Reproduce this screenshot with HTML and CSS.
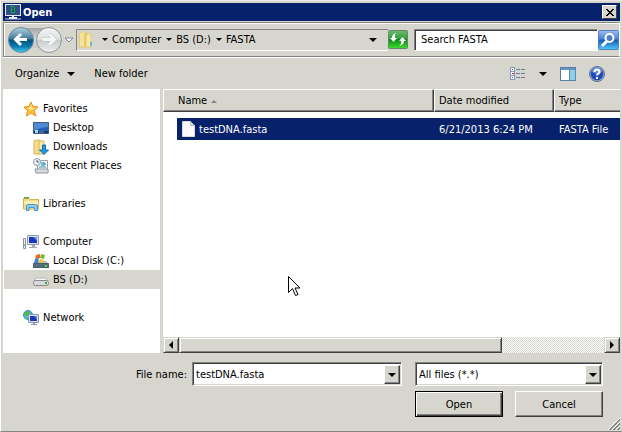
FILE: index.html
```html
<!DOCTYPE html>
<html lang="en">
<head>
    <meta charset="UTF-8">
    <meta name="viewport" content="width=device-width, initial-scale=1.0">
    <title>Open</title>
    <link rel="stylesheet" href="styles.css">
</head>
<body>
    <div class="dialog">
        <header class="title-bar">
            <svg class="title-icon" width="16" height="16" viewBox="0 0 16 16">
                <rect width="16" height="12" fill="#e8ebf5"/>
                <rect x="1" y="1" width="14" height="10" fill="#314d8c"/>
                <path d="M4 15h8v-2h-3v-1H7v1H4z" fill="#f0f0f0"/>
                <path d="M6 2h3v1h1v2H9v1h1v3H6z" fill="#12b340"/>
                <path d="M7 3h2v2H7zM7 6h2v2H7z" fill="#19474d"/>
                <path d="M0 15h16" stroke="#cdd3df"/>
            </svg>
            <h1>Open</h1>
            <button class="close" aria-label="Close">
                <svg width="8" height="7" viewBox="0 0 8 7" shape-rendering="crispEdges"><path d="M0 0h2v1h1v1h2V1h1V0h2v1H7v1H6v1H5v1h1v1h1v1h1v1H6V6H5V5H3v1H2v1H0V6h1V5h1V4h1V3H2V2H1V1H0z" fill="#000"/></svg>
            </button>
        </header>

        <div class="nav-bar">
            <div class="travel">
                <svg width="66" height="28" viewBox="0 0 66 28">
                    <defs>
                        <linearGradient id="track" x1="0" y1="0" x2="0" y2="1">
                            <stop offset="0" stop-color="#a2a6a8"/>
                            <stop offset=".5" stop-color="#d5d8d9"/>
                            <stop offset="1" stop-color="#bfc3c4"/>
                        </linearGradient>
                        <linearGradient id="back" x1="0" y1="0" x2="0" y2="1">
                            <stop offset="0" stop-color="#b2d2df"/>
                            <stop offset=".45" stop-color="#437b9f"/>
                            <stop offset=".5" stop-color="#07527f"/>
                            <stop offset=".75" stop-color="#0878ae"/>
                            <stop offset="1" stop-color="#44d0ee"/>
                        </linearGradient>
                        <linearGradient id="forward" x1="0" y1="0" x2="0" y2="1">
                            <stop offset="0" stop-color="#f4f5f5"/>
                            <stop offset=".49" stop-color="#dddfdf"/>
                            <stop offset=".5" stop-color="#c6caca"/>
                            <stop offset="1" stop-color="#eef0ef"/>
                        </linearGradient>
                    </defs>
                    <path d="M13 2h28v22q-14-5-28 0z" fill="url(#track)"/>
                    <circle cx="14" cy="14" r="12.5" fill="url(#back)" stroke="#6f8994"/>
                    <path d="M20 13.500H9M14 8l-5.500 5.500L14 19" fill="none" stroke="#fff" stroke-width="3"/>
                    <circle cx="42" cy="14" r="12.5" fill="url(#forward)" stroke="#8f9495"/>
                    <path d="M36 13.500h11M42 8l5.500 5.500L42 19" fill="none" stroke="#bcc1c1" stroke-width="4"/>
                    <path d="M36 13.500h11M42 8l5.500 5.500L42 19" fill="none" stroke="#f5f6f6" stroke-width="3"/>
                    <path d="M58 12h8l-4 4z" fill="#fff" stroke="#80899b"/>
                </svg>
            </div>
            <div class="address">
                <svg width="14" height="18" viewBox="0 0 14 18">
                    <path d="M.5 3l2-2h4v14l-2 1h-4z" fill="#f6e39a" stroke="#e6cb74"/>
                    <path d="M5 2h3l1 1v12l-3 2H5z" fill="#e9ca69"/>
                    <path d="M9 3h3v13H7V5z" fill="#f9e8a4" stroke="#e6cb74"/>
                    <path d="M12 11v4" stroke="#6cb3d8" stroke-width="2"/>
                </svg>
                <ol class="crumbs">
                    <li><a href="#">Computer</a></li>
                    <li><a href="#">BS (D:)</a></li>
                    <li><a href="#">FASTA</a></li>
                </ol>
                <button class="address-drop" aria-label="Previous locations"><span class="arrow-down"></span></button>
            </div>
            <button class="refresh" aria-label="Refresh">
                <svg width="20" height="19" viewBox="0 0 20 19">
                    <defs>
                        <linearGradient id="green" x1="0" y1="0" x2="0" y2="1">
                            <stop offset="0" stop-color="#6cbd70"/>
                            <stop offset=".49" stop-color="#32993a"/>
                            <stop offset=".5" stop-color="#078c0d"/>
                            <stop offset="1" stop-color="#42dc32"/>
                        </linearGradient>
                    </defs>
                    <rect x=".5" y=".5" width="19" height="18" rx="1" fill="url(#green)" stroke="#67876a"/>
                    <path d="M8 3Q4 4 4 8H2l3.500 4L9 8H7q-1-3 1-5zM11 16q5-1 5-5h2l-3.500-4L11 11h2q1 3-2 5z" fill="#fff"/>
                </svg>
            </button>
            <input class="search" type="text" aria-label="Search FASTA" value="Search FASTA">
            <button class="search-go" aria-label="Search">
                <svg width="21" height="20" viewBox="0 0 21 20">
                    <defs>
                        <linearGradient id="blue" x1="0" y1="0" x2="0" y2="1">
                            <stop offset="0" stop-color="#9ebdf0"/>
                            <stop offset=".45" stop-color="#4a80d9"/>
                            <stop offset=".5" stop-color="#1558bb"/>
                            <stop offset="1" stop-color="#50c9f6"/>
                        </linearGradient>
                    </defs>
                    <rect x=".5" y=".5" width="20" height="19" rx="1" fill="url(#blue)" stroke="#557ebd"/>
                    <path d="M9 11l-5 5" stroke="#fff" stroke-width="3"/>
                    <circle cx="11.500" cy="8" r="4" fill="#4d7fca" stroke="#fff" stroke-width="2"/>
                </svg>
            </button>
        </div>

        <div class="toolbar">
            <button class="tool">Organize <span class="arrow-down"></span></button>
            <button class="tool">New folder</button>
            <div class="view-tools">
                <button class="tool" aria-label="Change your view">
                    <svg width="16" height="14" viewBox="0 0 16 14" shape-rendering="crispEdges">
                        <path d="M.5.5h4v4h-4zM.5 4.500h4v4h-4zM.5 8.500h4v4h-4z" fill="#fff" stroke="#8794b5"/>
                        <path d="M2 2h1v1H2z" fill="#238b2e"/><path d="M2 6h2v1H2z" fill="#ed2020"/><path d="M2 10h1v1H2z" fill="#2953be"/>
                        <path d="M6 2.500h4M11 2.500h4M6 6.500h4M11 6.500h4M6 10.500h4M11 10.500h4" stroke="#6b7c9f"/>
                    </svg>
                    <span class="arrow-down"></span>
                </button>
                <button class="tool" aria-label="Show the preview pane">
                    <svg width="16" height="14" viewBox="0 0 16 14" shape-rendering="crispEdges">
                        <path d="M.5.5h15v13H.5z" fill="#fff" stroke="#567ea9"/>
                        <path d="M1 1h14v2H1z" fill="#6596c9"/>
                        <path d="M10 3h5v10h-5z" fill="#8bd0eb"/><path d="M9.500 3v10M15 3v10" stroke="#5b8dae"/>
                    </svg>
                </button>
                <button class="tool" aria-label="Get help">
                    <svg width="16" height="16" viewBox="0 0 16 16">
                        <circle cx="8" cy="8" r="7.500" fill="#b9c8ea" stroke="#5c6991"/>
                        <circle cx="8" cy="8" r="6.500" fill="#204bb7"/>
                        <path d="M3 6a5 5 0 0 1 10 0q-5 3-10 0" fill="#6488d9"/>
                        <path d="M5.500 6q0-2.500 2.500-2.500T10.500 6Q10.500 7 9 8q-1 .5-1 1.500M8 11v2" fill="none" stroke="#fff" stroke-width="2"/>
                    </svg>
                </button>
            </div>
        </div>

        <main class="panes">
            <nav class="tree">
                <ul>
                    <li><a href="#">
                        <svg width="16" height="16" viewBox="0 0 16 16"><path d="M8 1l2 4.500 5 .5-4 3.500 2 5.500-5-3-4.500 3L4.500 9.500 1 6l5-.5z" fill="#ffc23a" stroke="#e78a1c"/><path d="M8 3l1 4 4 0-5 2-4-2 3-1z" fill="#ffe69b"/></svg>
                        Favorites</a>
                        <ul>
                            <li><a href="#">
                                <svg width="16" height="16" viewBox="0 0 16 16"><path d="M.5 2.500h15v11H.5z" fill="#2662b4" stroke="#3c5b86"/><path d="M1 3h14v4Q8 7 1 11z" fill="#4e8bd2"/><path d="M1 11h14v2H1z" fill="#183766"/><path d="M2 10h3v3H2z" fill="#9bd9f2"/><path d="M6 12h5" stroke="#7099ca"/></svg>
                                Desktop</a></li>
                            <li><a href="#">
                                <svg width="16" height="16" viewBox="0 0 16 16"><path d="M1 2l3-1h3v14H1z" fill="#f5dd8a" stroke="#d8b658"/><path d="M7 2h4v13H6V4z" fill="#f9e9ae" stroke="#d8b658"/><path d="M9.500 6h3v5h3L11 15.500 6.500 11h3z" fill="#249be0" stroke="#176cae"/></svg>
                                Downloads</a></li>
                            <li><a href="#">
                                <svg width="16" height="16" viewBox="0 0 16 16"><path d="M4.500 2.500h10v11h-10z" fill="#f4f7fa" stroke="#98a2ad"/><path d="M8 4h4v4H8z" fill="#6cc0e2"/><path d="M10 6h3M6 9h7" stroke="#5688ad"/><path d="M2 11h13v4H3z" fill="#d7dde2" stroke="#8d969f"/><circle cx="4" cy="4" r="3.500" fill="#eef1f4" stroke="#919ba8"/><path d="M4 2v2h2" fill="none" stroke="#4e637b"/></svg>
                                Recent Places</a></li>
                        </ul>
                    </li>
                    <li><a href="#">
                        <svg width="16" height="16" viewBox="0 0 16 16"><path d="M.5 13V2.500H6l1 1h8.500V13z" fill="#f6dc84" stroke="#d5b155"/><path d="M1 2h5" stroke="#75ab44" stroke-width="2"/><path d="M1 5h14v3H1z" fill="#fcedb6"/><path d="M3.500 14.500v-5l1-1h8l2 1v5h-3v-3H6v3z" fill="#8bcdee" stroke="#4697c5"/></svg>
                        Libraries</a></li>
                    <li><a href="#">
                        <svg width="16" height="16" viewBox="0 0 16 16"><path d="M.5 4.500h2v10h-2z" fill="#eceef0" stroke="#8c959d"/><path d="M1 11h1" stroke="#26a43a"/><path d="M4.500 1.500h11v9h-11z" fill="#dfe3ec" stroke="#8f9aac"/><path d="M6 3h8v6H6z" fill="#1838bd"/><path d="M10 3h4v4z" fill="#688ce6"/><path d="M9 11h3v2h2v1H6v-1h3z" fill="#a5adb9"/></svg>
                        Computer</a>
                        <ul>
                            <li><a href="#">
                                <svg width="16" height="16" viewBox="0 0 16 16"><path d="M3 8h10l3 3v4H0v-4z" fill="#b4bbc0"/><path d="M.5 10.500h15v4H.5z" fill="#546e7c" stroke="#4a5d68"/><path d="M12 12h2v2h-2z" fill="#39db5a"/><path d="M3 2l4-1v4L2 6z" fill="#ee662c"/><path d="M8 1l4 1-1 4-4-1z" fill="#7bb92c"/><path d="M2 6l4-1-1 5-4 0z" fill="#3689d4"/><path d="M7 6l4 1-1 3-4-1z" fill="#ffc52c"/></svg>
                                Local Disk (C:)</a></li>
                            <li><a href="#" class="selected">
                                <svg width="16" height="16" viewBox="0 0 16 16"><path d="M3 6h10l2 3H1z" fill="#f3f3f3" stroke="#b5b7b8"/><rect x=".5" y="8.500" width="15" height="5" rx="2" fill="#d7d9da" stroke="#85898c"/><path d="M12 10h2v2h-2z" fill="#2ba93c"/></svg>
                                BS (D:)</a></li>
                        </ul>
                    </li>
                    <li><a href="#">
                        <svg width="16" height="16" viewBox="0 0 16 16"><circle cx="5" cy="5" r="4.500" fill="#53b9df" stroke="#348caf"/><path d="M2 2l3-1 2 2-3 3-3-1zM4 7l2 2-2 1z" fill="#52ba40"/><path d="M5.500 4.500h10v8h-10z" fill="#dee4ee" stroke="#8995ad"/><path d="M7 6h7v5H7z" fill="#1838b8"/><path d="M11 6h3v4z" fill="#5b81df"/><path d="M10 13h2v1h2v1H8v-1h2z" fill="#929eae"/></svg>
                        Network</a></li>
                </ul>
            </nav>

            <section class="files">
                <table>
                    <thead>
                        <tr>
                            <th class="col-name">Name <span class="sort-up"></span></th>
                            <th class="col-date">Date modified</th>
                            <th class="col-type">Type</th>
                        </tr>
                    </thead>
                    <tbody>
                        <tr>
                            <td>
                                <span class="file">
                                    <svg width="13" height="16" viewBox="0 0 13 16"><path d="M.5.5h8l4 4v11H.5z" fill="#fcfbfa" stroke="#dcdcdc"/><path d="M8.500.5v4h4z" fill="#dbe3ea" stroke="#b5bfc7"/></svg>
                                    testDNA.fasta
                                </span>
                            </td>
                            <td>6/21/2013 6:24 PM</td>
                            <td>FASTA File</td>
                        </tr>
                    </tbody>
                </table>
                <div class="scrollbar">
                    <button class="scroll-btn" aria-label="Scroll left"><span class="arrow-left"></span></button>
                    <div class="scroll-track"><div class="scroll-thumb"></div></div>
                    <button class="scroll-btn" aria-label="Scroll right"><span class="arrow-right"></span></button>
                </div>
            </section>
        </main>

        <footer class="bottom">
            <label for="fileName">File name:</label>
            <div class="combo combo-name">
                <input id="fileName" type="text" value="testDNA.fasta">
                <button class="combo-btn" aria-label="Show file names"><span class="arrow-down"></span></button>
            </div>
            <div class="combo">
                <select id="fileType" aria-label="Files of type">
                    <option>All files (*.*)</option>
                </select>
                <span class="combo-btn"><span class="arrow-down"></span></span>
            </div>
            <div class="actions">
                <button class="push default">Open</button>
                <button class="push">Cancel</button>
            </div>
        </footer>

        <svg class="grip" width="12" height="12" viewBox="0 0 12 12">
            <path d="M0 12L12 0M4 12l8-8M8 12l4-4" stroke="#fff"/>
            <path d="M1 12L12 1M2 12L12 2M5 12l7-7M6 12l6-6M9 12l3-3M10 12l2-2" stroke="#848484"/>
        </svg>
        <svg class="pointer" width="13" height="21" viewBox="0 0 13 21">
            <path d="M.5.5v16l4-4 3 7 2.500-1-3-6.500h5z" fill="#fff" stroke="#000"/>
        </svg>
    </div>
</body>
</html>
```

FILE: styles.css
```css
* {
    box-sizing: border-box;
}
body {
    margin: 0;
    font-family: "DejaVu Sans Condensed", Tahoma, "Noto Sans", sans-serif;
    font-size: 11px;
    line-height: 15px;
    color: #000;
    background-color: #d6d6ce;
}
button, input, select {
    font: inherit;
    color: inherit;
    margin: 0;
    padding: 0;
    border: none;
    border-radius: 0;
    background: none;
}
svg {
    display: block;
    flex: none;
}
a {
    color: inherit;
    text-decoration: none;
}
ul, ol {
    list-style: none;
    margin: 0;
    padding: 0;
}
.dialog {
    position: relative;
    display: flex;
    flex-direction: column;
    min-height: 100vh;
    padding: 2px 2px 0;
    border-top: 1px solid #e8e8e4;
    border-left: 1px solid #fff;
    border-bottom: 1px solid #848484;
    background-color: #d6d6ce;
}

/* title bar */
.title-bar {
    display: flex;
    align-items: center;
    height: 18px;
    padding: 0 3px 0 2px;
    background-color: #08216b;
    color: #fff;
}
.title-bar h1 {
    flex: 1;
    margin: 0 0 0 2px;
    font-size: 11px;
    font-weight: bold;
}
.close {
    display: flex;
    align-items: center;
    justify-content: center;
    width: 15px;
    height: 14px;
    background-color: #d6d6ce;
    border: 1px solid;
    border-color: #fff #424142 #424142 #fff;
}

/* address and search */
.nav-bar {
    display: flex;
    align-items: center;
    height: 35px;
    margin-top: 1px;
    padding-left: 3px;
    border: 1px solid #848284;
    border-right-color: #fff;
    box-shadow: inset 1px 1px #fff, 0 1px #fff;
}
.travel {
    margin-right: 3px;
}
.address {
    flex: 1;
    display: flex;
    align-items: center;
    height: 22px;
    padding-left: 2px;
    border-top: 1px solid #848284;
    border-left: 1px solid #848284;
    border-bottom: 1px solid #fff;
}
.crumbs {
    flex: 1;
    display: flex;
    padding-left: 9px;
}
.crumbs li {
    display: flex;
    align-items: center;
    margin-right: 5px;
}
.crumbs li::before {
    content: "";
    margin-right: 4px;
    border: 3px solid transparent;
    border-top-color: #000;
    border-bottom: none;
}
.arrow-down {
    display: inline-block;
    border: 4px solid transparent;
    border-top-color: #000;
    border-bottom: none;
}
.address-drop {
    display: flex;
    padding: 4px 11px;
}
.refresh {
    margin-right: 6px;
}
.search {
    width: 184px;
    height: 22px;
    padding: 0 6px;
    background-color: #fff;
    border: 1px solid;
    border-color: #848284 #fff #fff #848284;
    box-shadow: inset 1px 1px #424142;
}

/* command bar */
.toolbar {
    display: flex;
    align-items: center;
    gap: 19px;
    height: 31px;
    margin-top: 1px;
    padding: 0 15px 0 12px;
}
.tool {
    display: flex;
    align-items: center;
    gap: 8px;
}
.view-tools {
    display: flex;
    align-items: center;
    gap: 13px;
    margin-left: auto;
}
.view-tools .tool {
    gap: 13px;
}

/* panes */
.panes {
    flex: 1;
    display: grid;
    grid-template-columns: 157px 1fr;
    gap: 3px;
}
.tree {
    padding-top: 10px;
    background-color: #fff;
}
.tree a {
    display: flex;
    align-items: center;
    gap: 4px;
    height: 19px;
    padding-left: 20px;
}
.tree li li a {
    padding-left: 30px;
}
.tree > ul > li {
    margin-bottom: 19px;
}
.tree .selected {
    margin-left: 1px;
    padding-left: 29px;
    background-color: #d6d6ce;
}
.files {
    display: flex;
    flex-direction: column;
    background-color: #fff;
}
.files table {
    width: 100%;
    table-layout: fixed;
    border-spacing: 0;
}
.files th {
    height: 23px;
    padding: 0 0 0 4px;
    text-align: left;
    font-weight: normal;
    background-color: #d6d6ce;
    border: 1px solid;
    border-color: #fff #424142 #424142 #fff;
    box-shadow: inset -1px -1px #848284;
}
.files th.col-name {
    padding-left: 14px;
}
.col-date {
    width: 120px;
}
.files th.col-type {
    width: 66px;
    border-right: none;
    box-shadow: inset 0 -1px #848284;
}
.sort-up {
    display: inline-block;
    margin-left: 1px;
    vertical-align: middle;
    border: 3px solid transparent;
    border-bottom-color: #848284;
    border-top: none;
}
.files tbody::before {
    content: "";
    display: block;
    height: 6px;
}
.files td {
    height: 22px;
    padding: 0 0 0 5px;
    color: #fff;
    background-color: #08216b;
    white-space: nowrap;
}
.files td:first-child {
    border-left: 14px solid #fff;
}
.file {
    display: flex;
    align-items: center;
    gap: 4px;
}
.scrollbar {
    display: flex;
    height: 16px;
    margin-top: auto;
}
.scroll-btn, .scroll-thumb {
    background-color: #d6d6ce;
    border: 1px solid;
    border-color: #d6d6ce #424142 #424142 #d6d6ce;
    box-shadow: inset 1px 1px #fff, inset -1px -1px #848284;
}
.scroll-btn {
    display: flex;
    align-items: center;
    justify-content: center;
    width: 16px;
}
.scroll-track {
    flex: 1;
    background: repeating-conic-gradient(#fff 0 25%, #d6d6ce 0 50%) 0 0 / 2px 2px;
}
.scroll-thumb {
    width: 76%;
    height: 100%;
}
.arrow-left, .arrow-right {
    border: 4px solid transparent;
}
.arrow-left {
    border-right-color: #000;
    border-left: none;
}
.arrow-right {
    border-left-color: #000;
    border-right: none;
}

/* file name and buttons */
.bottom {
    display: grid;
    grid-template-columns: 189px 1fr 188px;
    align-items: center;
    row-gap: 5px;
    padding: 9px 17px 14px 0;
}
.bottom label {
    padding-right: 5px;
    text-align: right;
}
.combo {
    position: relative;
    display: flex;
    height: 24px;
    background-color: #fff;
    border: 1px solid;
    border-color: #848284 #fff #fff #848284;
    box-shadow: inset 1px 1px #424142, inset -1px -1px #d6d6ce;
}
.combo-name {
    margin-right: 13px;
}
.combo input, .combo select {
    flex: 1;
    min-width: 0;
    padding-left: 3px;
    appearance: none;
}
.combo-btn {
    position: absolute;
    top: 2px;
    right: 1px;
    bottom: 1px;
    display: flex;
    align-items: center;
    justify-content: center;
    width: 16px;
    background-color: #d6d6ce;
    border: 1px solid;
    border-color: #fff #424142 #424142 #fff;
    box-shadow: inset -1px -1px #848284;
    pointer-events: none;
}
.actions {
    grid-column: 3;
    display: grid;
    grid-template-columns: 1fr 1fr;
    gap: 12px;
}
.push {
    height: 26px;
    background-color: #d6d6ce;
    border: 1px solid;
    border-color: #fff #424142 #424142 #fff;
    box-shadow: inset -1px -1px #848284;
}
.push.default {
    border-color: #000;
    box-shadow: inset 1px 1px #fff, inset -1px -1px #424142, inset -2px -2px #848284;
}

/* laid over the dialog */
.grip {
    position: absolute;
    right: 2px;
    bottom: 1px;
}
.pointer {
    position: absolute;
    left: 287px;
    top: 275px;
}
```
